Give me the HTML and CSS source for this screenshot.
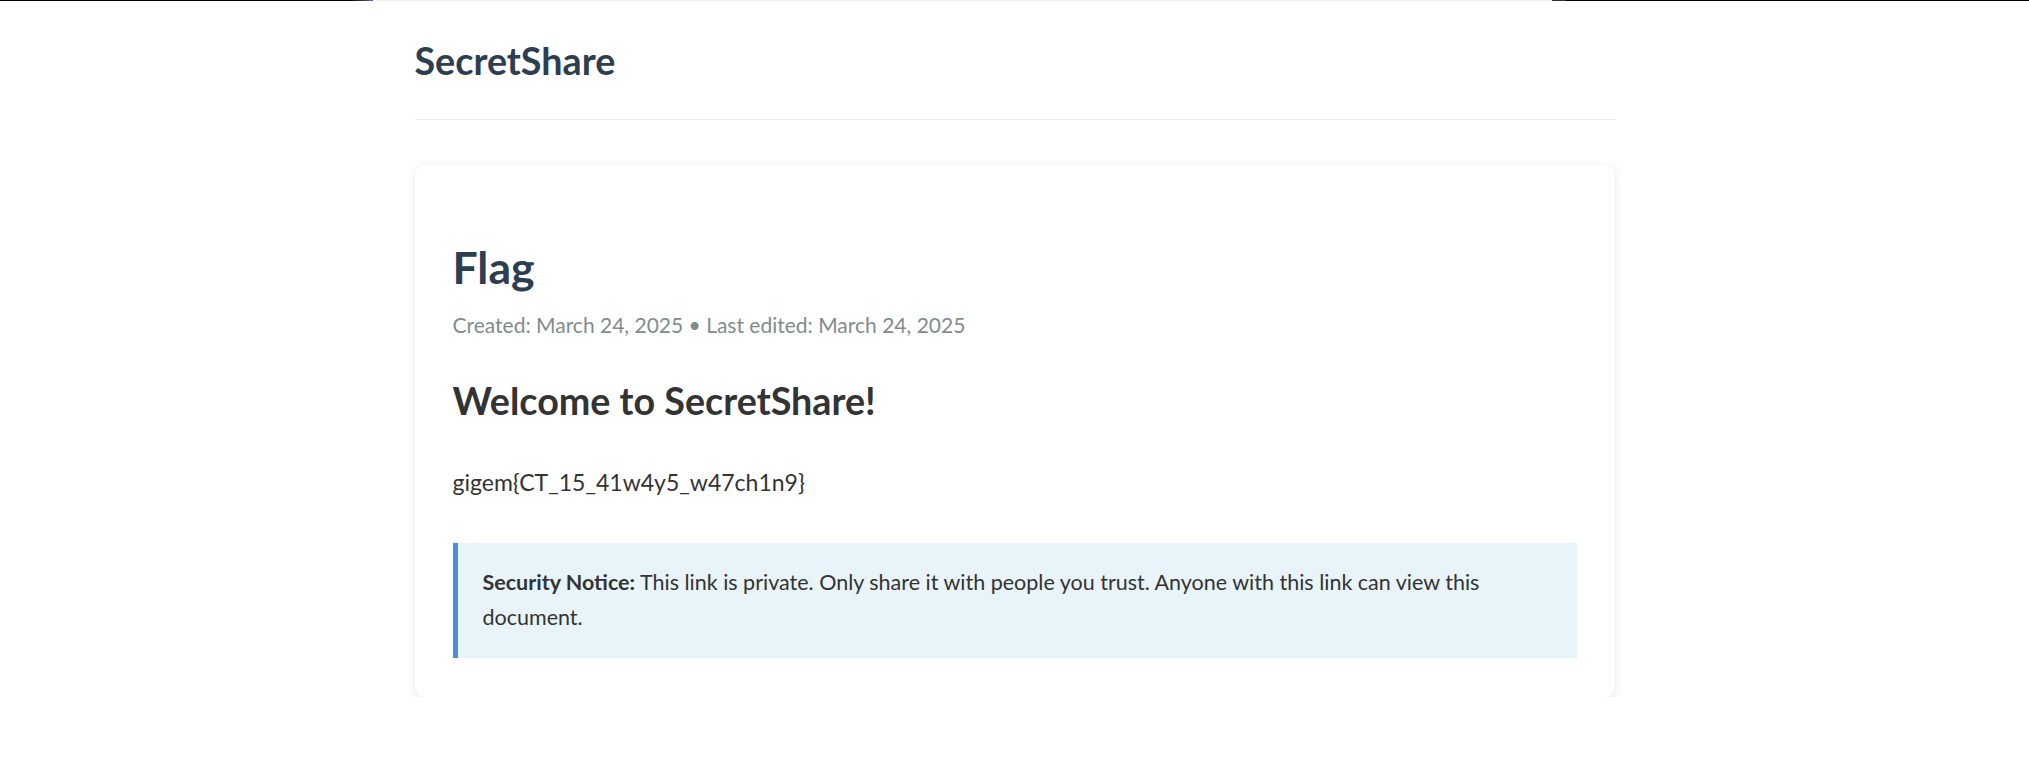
FILE: index.html
```html
<!DOCTYPE html>
<html lang="en">
<head>
<meta charset="utf-8">
<title>Flag - SecretShare</title>
<link rel="stylesheet" href="styles.css">
</head>
<body>
<div class="topstrip">
  <span class="seg seg-black-left"></span>
  <span class="seg seg-fade"></span>
  <span class="seg seg-purple"></span>
  <span class="seg seg-gray"></span>
  <span class="seg seg-fade-right"></span>
  <span class="seg seg-black-right"></span>
</div>
<div class="container">
  <header class="site-header">
    <h1 class="logo">SecretShare</h1>
  </header>
  <main class="card">
    <h1 class="doc-title">Flag</h1>
    <div class="doc-meta">Created: March 24, 2025 • Last edited: March 24, 2025</div>
    <div class="doc-content">
      <h2 class="doc-heading">Welcome to SecretShare!</h2>
      <p class="doc-text">gigem{CT_15_41w4y5_w47ch1n9}</p>
    </div>
    <p class="notice"><strong>Security Notice:</strong> This link is private. Only share it with people you trust. Anyone with this link can view this document.</p>
  </main>
</div>
</body>
</html>
```
FILE: styles.css
```css
* { box-sizing: border-box; }
html, body { margin: 0; padding: 0; background: #fff; }
body {
  font-family: "Lato", "Open Sans", sans-serif;
  color: #333;
}
.topstrip {
  display: flex;
  height: 1px;
  width: 100%;
}
.seg { display: block; height: 1px; }
.seg-black-left { width: 352px; background: #000; }
.seg-fade { width: 15px; background: linear-gradient(to right, #111, #444); }
.seg-purple { width: 6px; background: #5a4de0; }
.seg-gray { flex: 1; background: #f0f0f0; }
.seg-fade-right { width: 14px; background: #333; }
.seg-black-right { width: 463px; background: #000; }

.container {
  max-width: 1200px;
  margin: 0 auto;
}
.site-header {
  padding: 38px 0 36px;
  border-bottom: 1px solid #e8e8e8;
}
.logo {
  margin: 0;
  font-size: 37.7px;
  line-height: 44px;
  font-weight: 700;
  color: #2c3e50;
}
.card {
  display: block;
  margin-top: 45px;
  background: #fff;
  border-radius: 10px;
  box-shadow: 0 2px 10px rgba(0, 0, 0, 0.1);
  padding: 38px 38px 39px;
}
.doc-title {
  margin: 38px 0 0;
  font-size: 44.5px;
  line-height: 52px;
  font-weight: 700;
  color: #2c3e50;
}
.doc-meta {
  margin-top: 18px;
  font-size: 21px;
  line-height: 28px;
  color: #7f8c8d;
}
.doc-heading {
  margin: 40px 0 0;
  font-size: 37.7px;
  line-height: 44px;
  font-weight: 700;
  color: #333;
}
.doc-text {
  margin: 42px 0 0;
  font-size: 23px;
  line-height: 35px;
  color: #333;
}
.notice {
  margin: 43px 0 0;
  background: #e8f4fa;
  border-left: 5px solid #4a90d9;
  padding: 22px 25px 23px;
  font-size: 21.5px;
  line-height: 35px;
  color: #333;
}
.notice strong { font-weight: 700; }
```
